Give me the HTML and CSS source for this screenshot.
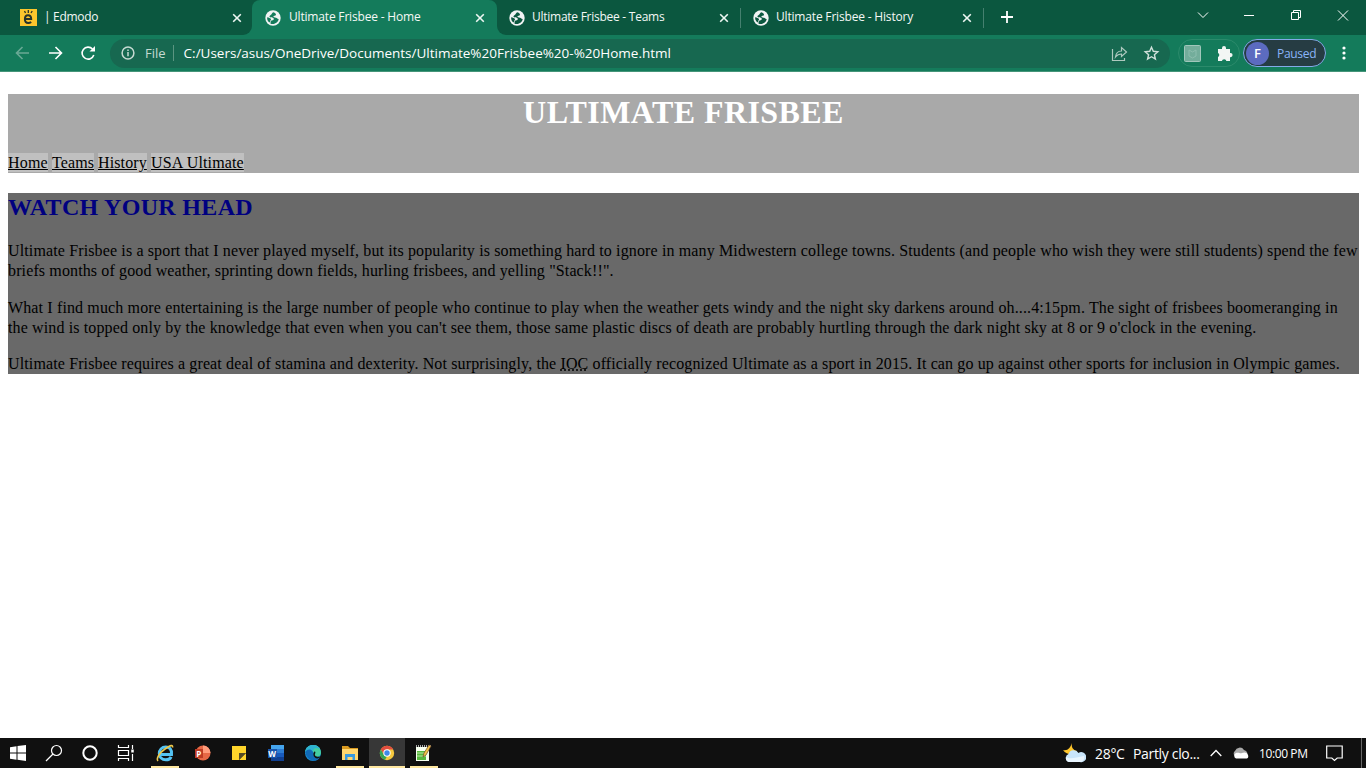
FILE: index.html
```html
<!DOCTYPE html>
<html lang="en">
<head>
<meta charset="utf-8">
<title>Ultimate Frisbee - Home</title>
<link rel="stylesheet" href="styles.css">
</head>
<body>
<svg class="defs" width="0" height="0">
  <symbol id="globe" viewBox="0 0 16 16"><circle cx="8" cy="8" r="7.700" fill="#f1f3f4"/><path d="M8.300 2.200C7 2.700 6.800 4 6 4.800c-.8.800-1.800 1-1.500 2 .4 1.200 3.600.3 4.200 1.700.5 1.300-.7 1.800-1.900 2-1.300.2-1.200 1.700-1.300 3.200 1.300.5 3 .6 4.400-.1 2.200-1 3.500-2.600 3.800-4.600-1.200.2-1.500-.8-2.700-1.200-1.300-.4-2.800-.2-2.600-1.200.2-.9 2.100-.5 2.500-1.500.4-1-.6-2.200-2.600-2.900zM2.200 7.200c1.600.3 3.500.8 3.800 1.800.2.900-.7 1.300-.8 2.100l-.5 1.500C3 11.500 1.800 9.500 2.200 7.200z" fill="currentColor"/></symbol>
  <symbol id="x" viewBox="0 0 10 10"><path d="M1.200 1.200l7.600 7.600M8.800 1.200L1.200 8.800" stroke="#eef7f3" stroke-width="1.600"/></symbol>
</svg>
<header class="browser">
  <div class="tabs">
    <div class="tab first"><svg class="fav" viewBox="0 0 17 17"><path fill="#fcc62d" d="M0 0h17v17H0z"/><path d="M5 10h6.200C11.200 7.600 10 6.300 8 6.300S4.900 7.800 4.900 10.300 6.300 14 8.300 14c1.200 0 2.100-.4 2.900-1" fill="none" stroke="#27342b" stroke-width="2"/><path d="M4.500 2l1 2M8.300 1v3M12.200 2l-1.200 2" stroke="#27342b" stroke-width="1.300"/></svg><span class="t0">| Edmodo</span><svg class="close"><use href="#x"/></svg></div>
    <div class="tab active"><svg class="fav"><use href="#globe"/></svg><span class="t1">Ultimate Frisbee - Home</span><svg class="close"><use href="#x"/></svg></div>
    <div class="tab teams"><svg class="fav"><use href="#globe"/></svg><span class="t2">Ultimate Frisbee - Teams</span><svg class="close"><use href="#x"/></svg></div>
    <div class="tab history"><svg class="fav"><use href="#globe"/></svg><span class="t3">Ultimate Frisbee - History</span><svg class="close"><use href="#x"/></svg></div>
    <svg class="plus" viewBox="0 0 12 12"><path d="M6 0v12M0 6h12" stroke="#fff" stroke-width="1.800"/></svg>
    <svg class="winbtns" width="180" height="35" viewBox="1186 0 180 35" fill="none" stroke="#fff"><path d="M1198 12.500l5 5 5-5"/><path d="M1244 15.500h10"/><path d="M1291.500 12.500h7v7h-7zM1293.500 12v-1.500h7v7H1299"/><path d="M1338 10.500l10 10M1348 10.500l-10 10"/></svg>
  </div>
  <div class="toolbar">
    <svg class="navs" width="110" height="36" viewBox="0 35 110 36" fill="none" stroke="#fff" stroke-width="1.600"><g stroke="#69a995"><path d="M29 53H17M22.500 47L16.500 53l6 6"/></g><path d="M49 53h12M55.500 47l6 6-6 6"/><path d="M92.500 49A6 6 0 1 0 93.800 55"/><path d="M89.500 51.500H95V46z" fill="#fff" stroke="none"/></svg>
    <div class="address">
      <svg class="info" viewBox="0 0 14 14" fill="none" stroke="#c6dad2" stroke-width="1.500"><circle cx="7" cy="7" r="5.900"/><path d="M7 6v4.300M7 3.500v1.500"/></svg>
      <span class="file">File</span><i class="bar"></i><span class="url">C:/Users/asus/OneDrive/Documents/Ultimate%20Frisbee%20-%20Home.html</span>
      <svg class="actions" width="58" height="30" viewBox="1108 38 58 30" fill="none" stroke="#afc9bf" stroke-width="1.200"><path d="M1112.500 49v11.500h12V58M1115.500 57c.5-4 3-6 6-6v-3.500l5 4.500-5 4.500V54c-2.800 0-4.500 1-6 3z"/><path stroke="#d0e0da" stroke-width="1.400" d="M1151.500 47.200l1.800 4.100 4.500.4-3.400 3 1 4.400-3.900-2.400-3.900 2.400 1-4.400-3.400-3 4.500-.4z"/></svg>
    </div>
    <div class="extensions"><svg width="60" height="28" viewBox="1179 39 60 28"><rect x="1184.500" y="45.500" width="16" height="16" rx="1" fill="#73ad9b" stroke="#a0c7bb"/><path d="M1189 50l3.500 2 3.500-2v6l-3.500 2-3.500-2z" fill="none" stroke="#8cbdae"/><path fill="#f2f6f4" d="M1218 49h4v-1a2 2 0 0 1 4 0v1h4v4h.500a2 2 0 0 1 0 4.200H1230V61h-3.600a2.300 2.300 0 0 0-4.500 0H1218v-4a2.200 2.200 0 0 0 0-4z"/></svg></div>
    <div class="profile"><b>F</b><span>Paused</span></div>
    <svg class="dots" viewBox="0 0 4 14" fill="#fff"><circle cx="2" cy="2" r="1.600"/><circle cx="2" cy="7" r="1.600"/><circle cx="2" cy="12" r="1.600"/></svg>
  </div>
</header>
<main>
  <div class="masthead"><h1>ULTIMATE FRISBEE</h1>
    <nav><a class="n1">Home</a><a class="n2">Teams</a><a class="n3">History</a><a class="n4">USA Ultimate</a></nav>
  </div>
  <section><h2>WATCH YOUR HEAD</h2>
    <p><span class="l1">Ultimate Frisbee is a sport that I never played myself, but its popularity is something hard to ignore in many Midwestern college towns. Students (and people who wish they were still students) spend the few</span><br><span class="l2">briefs months of good weather, sprinting down fields, hurling frisbees, and yelling "Stack!!".</span></p>
    <p><span class="l3">What I find much more entertaining is the large number of people who continue to play when the weather gets windy and the night sky darkens around oh....4:15pm. The sight of frisbees boomeranging in</span><br><span class="l4">the wind is topped only by the knowledge that even when you can't see them, those same plastic discs of death are probably hurtling through the dark night sky at 8 or 9 o'clock in the evening.</span></p>
    <p><span class="l5">Ultimate Frisbee requires a great deal of stamina and dexterity. Not surprisingly, the <abbr>IOC</abbr> officially recognized Ultimate as a sport in 2015. It can go up against other sports for inclusion in Olympic games.</span></p>
  </section>
</main>
<footer class="taskbar">
  <svg class="apps" width="440" height="30" viewBox="0 738 440 30">
    <path d="M10 747.200l6.500-.9v6.200H10zM17.500 746.100l8.500-1.100v7.500h-8.500zM10 753.500h6.500v6.200l-6.500-.9zM17.500 753.500H26v7.500l-8.500-1.200z" fill="#fff"/>
    <g fill="none" stroke="#fff" stroke-width="1.200"><circle cx="56.500" cy="750.500" r="5"/><path d="M53 754l-7 7"/><circle cx="90" cy="753" r="6.700" stroke-width="2"/><path d="M118.500 745v2.500h10V745M118.500 761v-2.500h10v2.500M118.500 750.500h10v5h-10zM132.500 745v4M132.500 754v7"/><path d="M132.500 749.500v3" stroke-width="2.500"/></g>
    <path d="M151 766h28v2h-28z" fill="#ffe8a0"/>
    <path d="M160 754.500h11.500c.5-5.500-2-7.500-5.700-7.500-4 0-6.500 3-6.500 6.500s2.700 6.300 6.500 6.300c2.800 0 4.500-1.200 5.300-3" fill="none" stroke="#54c4f4" stroke-width="3"/><path d="M158 761c-2-2 1-8 7-12s8-4.500 7.500-1.500" fill="none" stroke="#ecc74b" stroke-width="1.600"/>
    <circle cx="203" cy="753" r="7.500" fill="#e66845"/><path d="M203 745.500a7.500 7.500 0 0 1 7.500 7.500H203z" fill="#ff9c7b"/><path d="M195 749h8v9h-8z" fill="#bd3b23"/><text class="letter" x="196.200" y="756.500">P</text>
    <path d="M232 746h14v14h-14z" fill="#ffd52b"/><path d="M239 760v-7h7z" fill="#413e39"/><path d="M239 753h7l-7 7z" fill="#554b25"/>
    <path d="M271 745h13v5h-13z" fill="#45a5ee"/><path d="M271 749h13v4h-13z" fill="#2d7cd3"/><path d="M271 753h13v4h-13z" fill="#185abd"/><path d="M271 757h13v4h-13z" fill="#103f91"/><path d="M268 749h9v9h-9z" fill="#1854ab"/><text class="letter" x="268.300" y="756.500">W</text>
    <circle cx="313" cy="753" r="8" fill="#168bd2"/><path d="M305 754c0-7 5-9 8-9 5 0 8 3.500 8 7.500 0 3-2.500 4.500-5 4.500-3.500 0-2.500-1.500-2.500-3 0-5-6-5-8.500 0z" fill="#44cda1"/><path d="M305 754c0-7 4-9 8-9 4 0 6 2 7 4-4-2-7-1-7 3-2-3-6-2-8 2z" fill="#2eb3d0"/><path d="M305 752c3-4 8-3 8.500 2-.5 3 2 5 6 4-4 5-12 3-14.500-6z" fill="#116ab7"/><path d="M314 752c1-1 2 0 1 2s3 4 6 2l-2 2c-4 2-7-3-5-6z" fill="#111"/>
    <path d="M342 746h6l2 2h8v4h-16z" fill="#d99a20"/><path d="M342 749h16v11h-16z" fill="#ffd66f"/><path d="M345 760v-6h10v6h-2.500v-3h-5v3z" fill="#3899df"/><path d="M336 766h28v2h-28z" fill="#ffe8a0"/>
    <path d="M369 738h36v30h-36z" fill="#373737"/><path d="M369 766h36v2h-36z" fill="#ffe8a0"/><circle cx="387" cy="753" r="7.200" fill="#f5c83e"/><path d="M380.800 749.400a7.200 7.200 0 0 1 12.400 0H387l-3 5z" fill="#e14c3e"/><path d="M380.800 749.400l3.200 5.600 3 1.500-2.200 3.400a7.200 7.200 0 0 1-4-10.500z" fill="#36a355"/><circle cx="387" cy="753" r="3.700" fill="#fff"/><circle cx="387" cy="753" r="2.700" fill="#4089e8"/>
    <path d="M416 747h13v14h-13z" fill="#f7fff0"/><path d="M417 751h9v9h-9z" fill="#55b83e"/><path d="M417 753h10M417 756h9" stroke="#bce5a5"/><path d="M416 746h15" stroke="#aaa" stroke-width="2" stroke-dasharray="1 1"/><path d="M431 746l-5 9-3 2 1-4 5-8z" fill="#f2c449" stroke="#714c26" stroke-width=".7"/><path d="M410 766h28v2h-28z" fill="#ffe8a0"/>
  </svg>
  <div class="tray">
    <svg width="23" height="22" viewBox="1064 742 23 22"><path d="M1073 743c-1 4 1 7 5 8-1 4-10 5-14-1 5 1 7-2 9-7z" fill="#ffc62c"/><path d="M1070 762a4.200 4.200 0 0 1-.5-8 5.500 5.500 0 0 1 10-1 5 5 0 1 1 1.500 9z" fill="#c8e5fb"/><path d="M1070 762a4 4 0 0 1-3-5c5 3 10 0 18-1a4.500 4.500 0 0 1-4 6z" fill="#e9f6ff"/></svg>
    <span class="temp">28°C</span><span class="weather">Partly clo...</span>
    <svg class="caret" width="12" height="8" fill="none" stroke="#fff" stroke-width="1.300"><path d="M.7 7L6 1.500 11.300 7"/></svg>
    <svg class="cloud" width="17" height="12" viewBox="0 0 17 12"><path d="M3 9a3 3 0 0 1 0-5 5 5 0 0 1 9-1 4 4 0 0 1 2 7z" fill="#aaa"/><path d="M4 11.500a3 3 0 0 1 0-5.500c3-1 4 1 6 0s5-1 6 2-1 3.500-2 3.500z" fill="#fff"/></svg>
    <span class="time">10:00 PM</span>
    <svg class="notice" width="17" height="17" fill="none" stroke="#fff" stroke-width="1.200"><path d="M.7 1h15.500v12h-5l-2.700 2.500L5.800 13H.7z"/></svg>
    <i class="desktop"></i>
  </div>
</footer>
</body>
</html>
```
FILE: styles.css
```css
*{box-sizing:border-box}
body{margin:0;width:1366px;height:768px;overflow:hidden;display:flex;flex-direction:column;background:#fff}
svg{flex:none;display:block}
.defs{position:absolute}
.browser{flex:none;font-family:"Open Sans","Noto Sans",sans-serif;color:#fff}
.tabs{height:35px;display:flex;background:linear-gradient(90deg,#147b5b 0 0) 241px 20px / 268px 15px no-repeat,#0b573f}
.tab{width:244px;height:35px;display:flex;align-items:center;padding:0 12px 0 13px;font-size:12px;background:#0b573f;white-space:nowrap;color:#0b573f;flex:none}
.tab span{color:#f4f8f6;line-height:33px;height:35px}
.tab.first{width:252px;padding-left:20px;padding-right:10px;border-bottom-right-radius:9px}
.tab.active{width:245px;background:#147b5b;color:#147b5b;border-radius:8px 8px 0 0}
.fav{width:16px;height:16px;margin-right:8px}
.first .fav{width:17px;height:17px}
.close{width:10px;height:10px;margin-left:auto}
.tab.teams{width:243px;border-bottom-left-radius:9px;padding-left:12px;padding-right:11px}
.tab.history{background:linear-gradient(#45806f,#45806f) 0 8px / 1px 20px no-repeat,linear-gradient(#45806f,#45806f) 243px 8px / 1px 20px no-repeat,#0b573f;padding-right:12px}
.t0{letter-spacing:-.3px;margin-left:-1px}
.t1{letter-spacing:-.18px}
.t2{letter-spacing:-.26px;margin-left:-1px}
.t3{letter-spacing:-.18px;margin-left:-1px}
.plus{width:12px;height:12px;margin:11px 0 0 17px}
.winbtns{margin-left:auto}
.toolbar{height:37px;background:#147b5b;border-bottom:1px solid #459579;display:flex;align-items:center}
.navs{height:36px}
.address{width:1060px;height:29px;border-radius:15px;background:#176850;display:flex;align-items:center;padding:0 4px 0 11px;font-size:13px;white-space:nowrap}
.info{width:14px;height:14px}
.file{margin-left:10px;color:#c4d9d1}
.bar{width:1px;height:16px;background:#5b9581;margin:0 10px 0 7px}
.url{font-size:13.5px}
.actions{margin-left:auto}
.extensions{width:62px;height:28px;border:1px solid #2b8a6b;border-radius:14px;margin-left:8px;overflow:hidden}
.extensions svg{margin-top:-1px}
.profile{width:83px;height:28px;margin-left:3px;border:1px solid #83a9e8;border-radius:14px;background:#263c43;color:#8ab4f8;font-size:12px;display:flex;align-items:center;padding-left:2px}
.profile b{width:23px;height:23px;border-radius:50%;background:#5c6bc0;color:#fff;text-align:center;line-height:23px;font-weight:600;font-size:13px;margin-right:8px}
.profile span{letter-spacing:-.3px}
.dots{width:4px;height:14px;margin-left:16px}
main{flex:1;padding:22px 7px 0 8px;font:16px/20px "Liberation Serif",serif;color:#000;white-space:nowrap}
.masthead{height:79px;background:#a9a9a9}
h1{font-size:32px;line-height:37px;color:#fff;text-align:center;margin:0 0 22px;letter-spacing:.43px}
nav{display:flex;gap:4px;line-height:20px}
nav a{background:#c0c0c0;text-decoration:underline;height:19px;line-height:20px}
.n1{width:40px;letter-spacing:.2px}
.n2{width:42px;letter-spacing:.1px}
.n3{width:49px;letter-spacing:.12px}
.n4{width:93px;letter-spacing:.14px}
section{height:181px;background:#696969;margin-top:20px}
h2{font-size:24px;line-height:28px;color:#000080;margin:0 0 20px;letter-spacing:.33px}
p{margin:0 0 17px}
p+p{margin-bottom:16px}
p+p+p{margin:0}
.l1{letter-spacing:.132px}
.l2{letter-spacing:.128px}
.l3{letter-spacing:.135px}
.l4{letter-spacing:.126px}
.l5{letter-spacing:.128px}
abbr{text-decoration:underline dotted}
.taskbar{flex:none;height:30px;background:#101010;display:flex;color:#fff;font-family:"Open Sans","Noto Sans",sans-serif;font-size:14px}
.letter{font:bold 8px "Open Sans",sans-serif;fill:#fff}
.tray{width:303px;margin-left:auto;display:flex;align-items:center;white-space:nowrap}
.temp{margin-left:9px;width:38px;letter-spacing:-.3px}
.weather{width:77px;letter-spacing:-.33px}
.caret{margin-left:0}
.cloud{margin-left:10px}
.time{font-size:12px;margin-left:10px;width:67px;letter-spacing:-.4px}
.desktop{width:1px;height:30px;background:#666;margin-left:auto;margin-right:4px}
```
